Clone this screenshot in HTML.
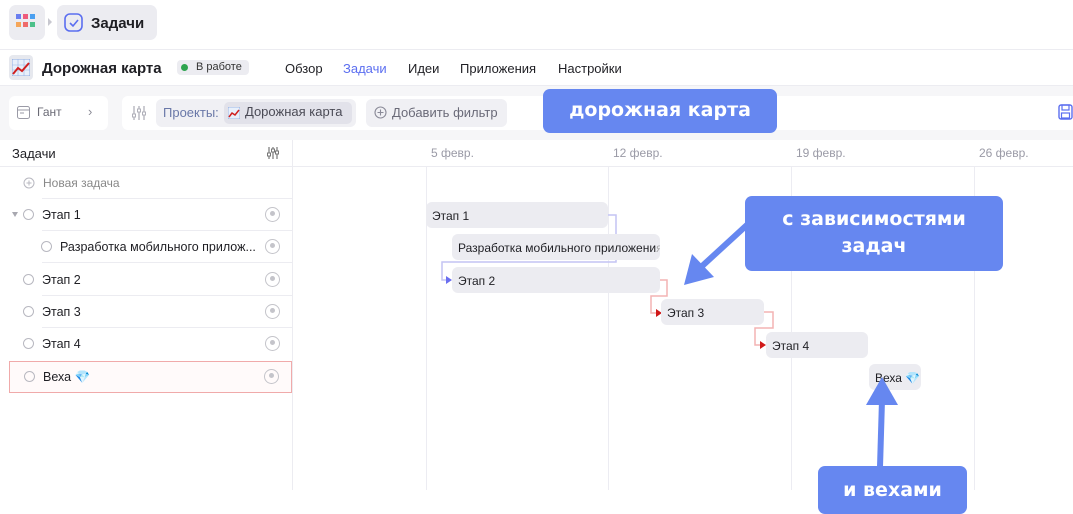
<!DOCTYPE html>
<html><head><meta charset="utf-8"><style>
*{box-sizing:border-box;margin:0;padding:0}
body{width:1073px;height:514px;overflow:hidden;background:#fff;font-family:"Liberation Sans","Noto Sans CJK SC",sans-serif;color:#1f1f24;position:relative;font-size:13px}
.a{position:absolute}
.row{position:absolute;left:0;width:292px;height:32px}
.row .t{position:absolute;top:9px;font-size:12.5px}
.circ{position:absolute;width:11px;height:11px;border:1px solid #b8b8c0;border-radius:50%;top:10px}
.av{position:absolute;left:265px;top:8px;width:15px;height:15px;border:1.3px solid #c4c4ca;border-radius:50%}
.av:after{content:"";position:absolute;left:4px;top:3px;width:5px;height:5px;background:#c4c4ca;border-radius:50%}
.sep{position:absolute;left:42px;right:0;bottom:0;height:1px;background:#ececf1}
.bar{position:absolute;height:26px;background:#ececf1;border-radius:6px;font-size:12px;padding:7px 0 0 6px;white-space:nowrap}
.vl{position:absolute;width:1px;background:#ececf2}
.dt{position:absolute;top:146px;font-size:12px;color:#9a9aa6}
.call{position:absolute;background:#6687f0;color:#fff;font-weight:bold;border-radius:7px;text-align:center;font-size:19px;line-height:27px;font-family:"DejaVu Sans","Liberation Sans",sans-serif}
</style></head><body>
<div class="a" style="left:9px;top:5px;width:36px;height:35px;background:#ececf1;border-radius:7px"></div>
<svg class="a" style="left:16px;top:14px" width="22" height="16"><rect x="0" y="0" width="5" height="5" fill="#6a7ef0"/><rect x="7" y="0" width="5" height="5" fill="#ef5b7b"/><rect x="14" y="0" width="5" height="5" fill="#4a9ff0"/><rect x="0" y="8" width="5" height="5" fill="#f5a65a"/><rect x="7" y="8" width="5" height="5" fill="#ef6a6a"/><rect x="14" y="8" width="5" height="5" fill="#4cc08a"/></svg>
<div class="a" style="left:48px;top:18px;width:0;height:0;border-left:4px solid #c8c8d0;border-top:4px solid transparent;border-bottom:4px solid transparent"></div>
<div class="a" style="left:57px;top:5px;width:100px;height:35px;background:#ececf1;border-radius:7px"></div>
<svg class="a" style="left:64px;top:13px" width="19" height="19"><rect x="1" y="1" width="17" height="17" rx="5" fill="none" stroke="#5b6ef0" stroke-width="1.6"/><path d="M6 10l3 3 5-6" fill="none" stroke="#5b6ef0" stroke-width="1.6"/></svg>
<div class="a" style="left:91px;top:15px;font-size:15px;font-weight:bold">Задачи</div>
<div class="a" style="left:0;top:49px;width:1073px;height:1px;background:#ececf1"></div>
<div class="a" style="left:9px;top:55px;width:24px;height:25px;background:#e6e8ee;border-radius:4px"></div>
<svg class="a" style="left:12px;top:59px" width="18" height="17"><rect x="0" y="0" width="18" height="17" fill="#e8f0fb" stroke="#6a90d8" stroke-width=".7"/><path d="M0 6h18M0 11h18M6 0v17M12 0v17" stroke="#9ab6e4" stroke-width=".6"/><path d="M1 15l5-6 4 3 7-8" fill="none" stroke="#d02020" stroke-width="2"/></svg>
<div class="a" style="left:42px;top:60px;font-size:15px;font-weight:bold">Дорожная карта</div>
<div class="a" style="left:177px;top:60px;width:72px;height:15px;background:#ececf1;border-radius:4px"></div>
<div class="a" style="left:181px;top:64px;width:7px;height:7px;background:#2ea44f;border-radius:50%"></div>
<div class="a" style="left:196px;top:61px;font-size:11px;color:#333">В работе</div>
<div class="a" style="left:285px;top:61px;font-size:13px">Обзор</div>
<div class="a" style="left:343px;top:61px;font-size:13px;color:#5b6ef0">Задачи</div>
<div class="a" style="left:408px;top:61px;font-size:13px">Идеи</div>
<div class="a" style="left:460px;top:61px;font-size:13px">Приложения</div>
<div class="a" style="left:558px;top:61px;font-size:13px">Настройки</div>
<div class="a" style="left:0;top:85px;width:1073px;height:55px;background:#f6f6f8;border-top:1px solid #ececf1"></div>
<div class="a" style="left:9px;top:96px;width:99px;height:34px;background:#fff;border-radius:6px"></div>
<svg class="a" style="left:17px;top:106px" width="13" height="13"><rect x=".5" y=".5" width="12" height="12" rx="2" fill="none" stroke="#9a9aa6"/><path d="M1 4h11M3 7h4" stroke="#9a9aa6"/></svg>
<div class="a" style="left:37px;top:105px;font-size:12px;color:#6a6a75">Гант</div>
<div class="a" style="left:88px;top:104px;font-size:13px;color:#8a8a95">›</div>
<div class="a" style="left:122px;top:96px;width:951px;height:34px;background:#fff;border-radius:6px 0 0 6px"></div>
<svg class="a" style="left:131px;top:105px" width="16" height="16"><path d="M3 1v14M8 1v14M13 1v14" stroke="#b0b0ba" stroke-width="1.3"/><rect x="1.5" y="9" width="3" height="3" fill="#fff" stroke="#b0b0ba"/><rect x="6.5" y="4" width="3" height="3" fill="#fff" stroke="#b0b0ba"/><rect x="11.5" y="7" width="3" height="3" fill="#fff" stroke="#b0b0ba"/></svg>
<div class="a" style="left:156px;top:99px;width:200px;height:28px;background:#f0f0f4;border-radius:6px"></div>
<div class="a" style="left:163px;top:105px;font-size:13px;color:#6a78a8">Проекты:</div>
<div class="a" style="left:224px;top:102px;width:128px;height:22px;background:#e2e2ea;border-radius:5px"></div>
<svg class="a" style="left:228px;top:107px" width="12" height="12"><rect width="12" height="12" fill="#e8f0fb" stroke="#6a90d8" stroke-width=".6"/><path d="M1 10l3-4 3 2 4-5" fill="none" stroke="#d02020" stroke-width="1.5"/></svg>
<div class="a" style="left:245px;top:104px;font-size:13px;color:#4a4a55">Дорожная карта</div>
<div class="a" style="left:366px;top:99px;width:141px;height:28px;background:#f0f0f4;border-radius:6px"></div>
<svg class="a" style="left:374px;top:106px" width="13" height="13"><circle cx="6.5" cy="6.5" r="5.5" fill="none" stroke="#8a8a98" stroke-width="1.1"/><path d="M6.5 3.5v6M3.5 6.5h6" stroke="#8a8a98" stroke-width="1.1"/></svg>
<div class="a" style="left:392px;top:105px;font-size:13px;color:#6a6a78">Добавить фильтр</div>
<svg class="a" style="left:1058px;top:104px" width="15" height="16"><rect x="1" y="1" width="13" height="14" rx="2" fill="none" stroke="#5b6ef0" stroke-width="1.4"/><rect x="4" y="1" width="7" height="5" fill="none" stroke="#5b6ef0" stroke-width="1.2"/><rect x="3.5" y="9" width="8" height="5" fill="none" stroke="#5b6ef0" stroke-width="1.2"/></svg>
<div class="call" style="left:543px;top:89px;width:234px;height:44px;padding-top:8px">дорожная карта</div>
<div class="a" style="left:292px;top:140px;width:1px;height:350px;background:#ececf1"></div>
<div class="a" style="left:0;top:166px;width:1073px;height:1px;background:#ececf1"></div>
<div class="a" style="left:12px;top:146px;font-size:13px">Задачи</div>
<svg class="a" style="left:266px;top:146px" width="14" height="14"><path d="M3 1v12M7 1v12M11 1v12" stroke="#777" stroke-width="1.2"/><rect x="1.5" y="7" width="3" height="3" fill="#fff" stroke="#777"/><rect x="5.5" y="3" width="3" height="3" fill="#fff" stroke="#777"/><rect x="9.5" y="5" width="3" height="3" fill="#fff" stroke="#777"/></svg>
<div class="row" style="top:167px"><svg class="a" style="left:23px;top:10px" width="12" height="12"><circle cx="6" cy="6" r="5" fill="none" stroke="#b8b8c0"/><path d="M6 3.5v5M3.5 6h5" stroke="#b8b8c0"/></svg><div class="t" style="left:43px;color:#888;font-size:12px">Новая задача</div><div class="sep"></div></div>
<div class="row" style="top:199px"><div class="a" style="left:12px;top:13px;border-top:5px solid #a8a8b0;border-left:3.5px solid transparent;border-right:3.5px solid transparent"></div><div class="circ" style="left:23px"></div><div class="t" style="left:42px">Этап 1</div><div class="av"></div><div class="sep"></div></div>
<div class="row" style="top:231px"><div class="circ" style="left:41px"></div><div class="t" style="left:60px">Разработка мобильного прилож...</div><div class="av"></div><div class="sep"></div></div>
<div class="row" style="top:264px"><div class="circ" style="left:23px"></div><div class="t" style="left:42px">Этап 2</div><div class="av"></div><div class="sep"></div></div>
<div class="row" style="top:296px"><div class="circ" style="left:23px"></div><div class="t" style="left:42px">Этап 3</div><div class="av"></div><div class="sep"></div></div>
<div class="row" style="top:328px"><div class="circ" style="left:23px"></div><div class="t" style="left:42px">Этап 4</div><div class="av"></div></div>
<div class="a" style="left:9px;top:361px;width:283px;height:32px;border:1px solid #f0aaaa;background:#fffafa"></div>
<div class="row" style="top:361px"><div class="circ" style="left:24px"></div><div class="t" style="left:43px">Веха 💎</div><div class="av" style="left:264px"></div></div>
<div class="vl" style="left:426px;top:167px;height:323px"></div><div class="vl" style="left:608px;top:167px;height:323px"></div><div class="vl" style="left:791px;top:167px;height:323px"></div><div class="vl" style="left:974px;top:167px;height:323px"></div>
<div class="dt" style="left:431px">5 февр.</div><div class="dt" style="left:613px">12 февр.</div><div class="dt" style="left:796px">19 февр.</div><div class="dt" style="left:979px">26 февр.</div>
<svg class="a" style="left:0;top:0" width="1073" height="514">
<path d="M608 215h8v47h-174v18h6" fill="none" stroke="#c4c4f4" stroke-width="1.5"/>
<path d="M446 276l6 4-6 4z" fill="#6a6ef0"/>
<path d="M660 280h7v16h-16v17h6" fill="none" stroke="#f4b4b4" stroke-width="1.5"/>
<path d="M656 309l6 4-6 4z" fill="#d01818"/>
<path d="M764 312h9v16h-18v17h6" fill="none" stroke="#f4b4b4" stroke-width="1.5"/>
<path d="M760 341l6 4-6 4z" fill="#d01818"/>
</svg>
<div class="bar" style="left:426px;top:202px;width:182px">Этап 1</div>
<div class="bar" style="left:452px;top:234px;width:208px;overflow:hidden">Разработка мобильного приложени<span style="color:#aaa">я</span></div>
<div class="bar" style="left:452px;top:267px;width:208px">Этап 2</div>
<div class="bar" style="left:661px;top:299px;width:103px">Этап 3</div>
<div class="bar" style="left:766px;top:332px;width:102px">Этап 4</div>
<div class="bar" style="left:869px;top:364px;width:52px">Веха 💎</div>
<svg class="a" style="left:0;top:0" width="1073" height="514">
<path d="M748 224L700 268" stroke="#6687f0" stroke-width="6"/>
<path d="M684 285l8-31 22 23z" fill="#6687f0"/>
<path d="M880 467L882 400" stroke="#6687f0" stroke-width="6"/>
<path d="M882 377l-16 28h32z" fill="#6687f0"/>
</svg>
<div class="call" style="left:745px;top:196px;width:258px;height:75px;padding-top:10px">с зависимостями<br>задач</div>
<div class="call" style="left:818px;top:466px;width:149px;height:48px;padding-top:11px">и вехами</div>
</body></html>
